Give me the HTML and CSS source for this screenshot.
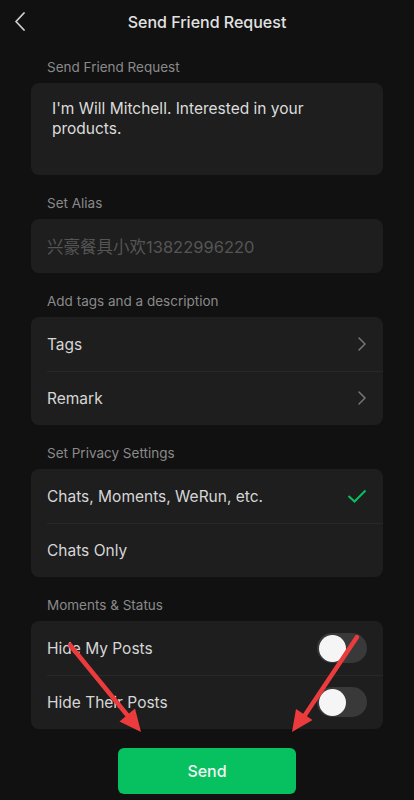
FILE: index.html
```html
<!DOCTYPE html>
<html lang="en">
<head>
  <meta charset="UTF-8">
  <title>Send Friend Request</title>
  <meta name="viewport" content="width=device-width, initial-scale=1.0">
  <link rel="stylesheet" href="styles.css">
</head>
<body>

<div class="page">
  <header class="top-bar">
    <button class="back-btn" title="Back">
      <svg width="44" height="44" viewBox="0 0 44 44"><polyline points="24,13 16,21.5 24,30" fill="none" stroke="#cfcfcf" stroke-width="1.8" stroke-linecap="round" stroke-linejoin="round"/></svg>
    </button>
    <h1>Send Friend Request</h1>
    <span></span>
  </header>

  <main class="content">
    <div class="section">
      <div class="section-label">Send Friend Request</div>
      <div class="card message">I'm Will Mitchell. Interested in your products.</div>
    </div>

    <div class="section">
      <div class="section-label">Set Alias</div>
      <div class="card">
        <div class="row placeholder">兴豪餐具小欢13822996220</div>
      </div>
    </div>

    <div class="section">
      <div class="section-label">Add tags and a description</div>
      <div class="card">
        <div class="row">
          <span>Tags</span>
          <svg width="10" height="14" viewBox="0 0 10 14"><polyline points="2,1 8,7 2,13" fill="none" stroke="#767676" stroke-width="1.5" stroke-linecap="round" stroke-linejoin="round"/></svg>
        </div>
        <div class="row">
          <span>Remark</span>
          <svg width="10" height="14" viewBox="0 0 10 14"><polyline points="2,1 8,7 2,13" fill="none" stroke="#767676" stroke-width="1.5" stroke-linecap="round" stroke-linejoin="round"/></svg>
        </div>
      </div>
    </div>

    <div class="section">
      <div class="section-label">Set Privacy Settings</div>
      <div class="card">
        <div class="row">
          <span>Chats, Moments, WeRun, etc.</span>
          <svg width="20" height="14" viewBox="0 0 20 14"><polyline points="1.5,7 7.5,12.5 18.5,1.5" fill="none" stroke="#07c160" stroke-width="2"/></svg>
        </div>
        <div class="row">
          <span>Chats Only</span>
        </div>
      </div>
    </div>

    <div class="section">
      <div class="section-label">Moments &amp; Status</div>
      <div class="card">
        <div class="row">
          <span>Hide My Posts</span>
          <span class="toggle"><span class="knob"></span></span>
        </div>
        <div class="row">
          <span>Hide Their Posts</span>
          <span class="toggle"><span class="knob"></span></span>
        </div>
      </div>
    </div>

    <button class="send-btn">Send</button>
  </main>

  <svg class="arrows" width="414" height="800" viewBox="0 0 414 800">
    <line x1="70" y1="645" x2="128" y2="716" stroke="#ec3b3d" stroke-width="4.5" stroke-linecap="round"/>
    <polygon points="141,732 119.5,721.5 135,708.5" fill="#ec3b3d"/>
    <line x1="357" y1="637" x2="305" y2="715" stroke="#ec3b3d" stroke-width="4.5" stroke-linecap="round"/>
    <polygon points="292,732 296,709 312.5,720" fill="#ec3b3d"/>
  </svg>
</div>

</body>
</html>
```

FILE: styles.css
```css
body {
  margin: 0;
  background: #111111;
  font-family: Inter, "Noto Sans", "Noto Sans CJK SC", sans-serif;
  color: #d8d8d8;
}
.page {
  position: relative;
  width: 414px;
  height: 800px;
  overflow: hidden;
}
.top-bar {
  display: grid;
  grid-template-columns: 44px 1fr 44px;
  align-items: center;
  height: 44px;
}
.back-btn {
  background: none;
  border: none;
  padding: 0;
  width: 44px;
  height: 44px;
  display: flex;
}
.top-bar h1 {
  margin: 0;
  text-align: center;
  font-size: 16px;
  font-weight: 500;
  color: #e2e2e2;
}
.content {
  padding: 0 31px;
  display: flex;
  flex-direction: column;
}
.section {
  margin-top: 18px;
}
.section:first-child {
  margin-top: 13px;
}
.section-label {
  height: 20px;
  line-height: 20px;
  font-size: 13.5px;
  color: #8a8a8a;
  padding-left: 16px;
  margin-bottom: 6px;
}
.card {
  background: #1e1e1e;
  border-radius: 8px;
  overflow: hidden;
}
.message {
  height: 92px;
  box-sizing: border-box;
  padding: 16px 21px;
  font-size: 15.5px;
  line-height: 20px;
  color: #dcdcdc;
}
.row {
  height: 54px;
  display: flex;
  align-items: center;
  justify-content: space-between;
  padding: 0 16px;
  font-size: 15.5px;
  color: #d6d6d6;
  position: relative;
}
.row + .row::before {
  content: "";
  position: absolute;
  left: 16px;
  right: 0;
  top: 0;
  border-top: 1px solid #272727;
}
.placeholder {
  color: #555555;
  font-size: 16.5px;
  font-family: Inter, "Noto Sans CJK SC", sans-serif;
}
.toggle {
  width: 50px;
  height: 30px;
  border-radius: 15px;
  background: #393939;
  display: flex;
  align-items: center;
  padding: 0 2px;
  box-sizing: border-box;
}
.knob {
  width: 27px;
  height: 27px;
  border-radius: 50%;
  background: #f5f5f5;
}
.send-btn {
  align-self: center;
  margin-top: 19px;
  width: 178px;
  height: 46px;
  border: none;
  border-radius: 6px;
  background: #07c160;
  color: #f2f2f2;
  font-family: Inter, "Noto Sans", sans-serif;
  font-size: 16px;
  font-weight: 500;
}
.arrows {
  position: absolute;
  left: 0;
  top: 0;
  pointer-events: none;
}
```
